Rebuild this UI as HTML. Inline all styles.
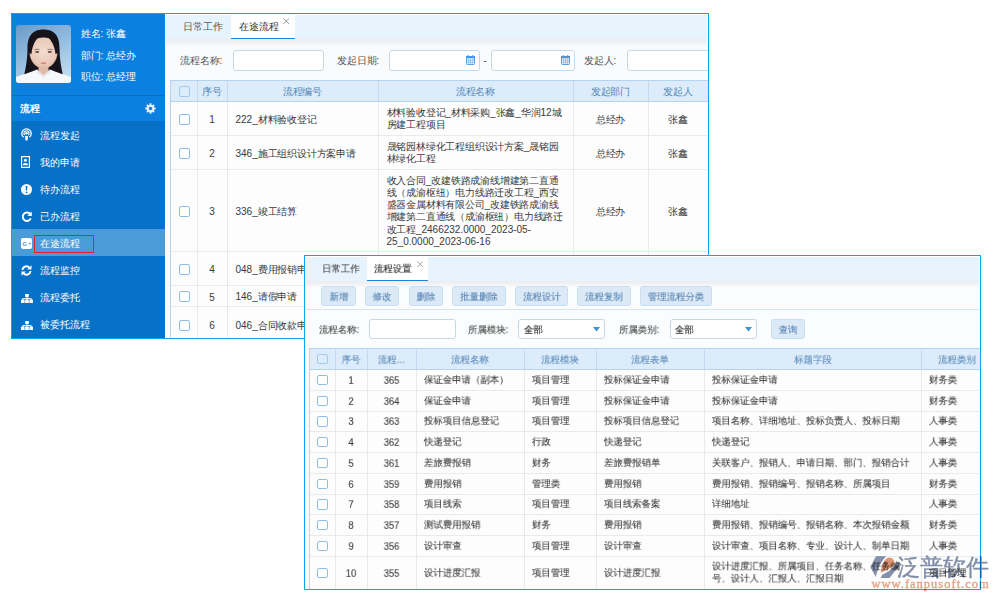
<!DOCTYPE html><html><head><meta charset="utf-8"><style>

html,body{margin:0;padding:0;width:1000px;height:600px;overflow:hidden;background:#fff;}
body{position:relative;font-family:"Liberation Sans",sans-serif;font-size:10px;color:#3c3c3c;}
div{box-sizing:border-box;}
.t{position:absolute;white-space:nowrap;}
svg{position:absolute;}

</style></head><body>
<div style="position:absolute;left:11px;top:13px;width:698px;height:326px;overflow:hidden;"><div style="position:absolute;left:-11px;top:-13px;width:1000px;height:600px;">
<div style="position:absolute;left:11px;top:13px;width:698px;height:326px;background:#ffffff;"></div>
<div style="position:absolute;left:166px;top:15px;width:541px;height:322px;background:#f9fbfd;"></div>
<div style="position:absolute;left:166px;top:15px;width:541px;height:24px;background:#e7f3fd;"></div>
<div style="position:absolute;left:231px;top:15px;width:64px;height:25px;background:#ffffff;border-bottom:2px solid #1f84d4;"></div>
<div class="t" style="left:183px;top:20.60px;line-height:12.000px;color:#555;">日常工作</div>
<div class="t" style="left:238.5px;top:20.60px;line-height:12.000px;color:#333;">在途流程</div>
<svg style="position:absolute;left:283px;top:18px" width="6.5" height="6.5" viewBox="0 0 6.5 6.5"><path d="M0.4 0.4L6.1 6.1M6.1 0.4L0.4 6.1" stroke="#8a8a8a" stroke-width="0.9"/></svg>
<div style="position:absolute;left:166px;top:39px;width:541px;height:8px;background:linear-gradient(#eaecef,#f9fbfd);"></div>
<div style="position:absolute;left:231px;top:40px;width:64px;height:1px;background:#f6e9e0;opacity:0.6;"></div>
<div class="t" style="left:179.5px;top:55.00px;line-height:12.000px;color:#555;">流程名称:</div>
<div style="position:absolute;left:233px;top:50px;width:91px;height:21px;background:#fff;border:1px solid #c3d9ec;border-radius:3px;"></div>
<div class="t" style="left:336.5px;top:55.00px;line-height:12.000px;color:#555;">发起日期:</div>
<div style="position:absolute;left:389px;top:50px;width:91px;height:21px;background:#fff;border:1px solid #c3d9ec;border-radius:3px;"></div>
<div style="position:absolute;left:491px;top:50px;width:84px;height:21px;background:#fff;border:1px solid #c3d9ec;border-radius:3px;"></div>
<div class="t" style="left:483.5px;top:55.00px;line-height:12.000px;color:#555;">-</div>
<div class="t" style="left:583.5px;top:55.00px;line-height:12.000px;color:#555;">发起人:</div>
<div style="position:absolute;left:627px;top:50px;width:100px;height:21px;background:#fff;border:1px solid #c3d9ec;border-radius:3px;"></div>
<svg style="position:absolute;left:466px;top:55px" width="9" height="10" viewBox="0 0 9 10"><rect x="0.5" y="1.5" width="8" height="8" rx="0.8" fill="#eef5fc" stroke="#5b9fe0" stroke-width="1"/><rect x="0" y="1" width="9" height="2.2" fill="#4d93dc"/><path d="M2.6 3.2V9M4.5 3.2V9M6.4 3.2V9M1 5.2H8M1 7.2H8" stroke="#86b8e8" stroke-width="0.7"/><rect x="1.7" y="0" width="1.1" height="2" fill="#5b9fe0"/><rect x="6.2" y="0" width="1.1" height="2" fill="#5b9fe0"/></svg>
<svg style="position:absolute;left:561px;top:55px" width="9" height="10" viewBox="0 0 9 10"><rect x="0.5" y="1.5" width="8" height="8" rx="0.8" fill="#eef5fc" stroke="#5b9fe0" stroke-width="1"/><rect x="0" y="1" width="9" height="2.2" fill="#4d93dc"/><path d="M2.6 3.2V9M4.5 3.2V9M6.4 3.2V9M1 5.2H8M1 7.2H8" stroke="#86b8e8" stroke-width="0.7"/><rect x="1.7" y="0" width="1.1" height="2" fill="#5b9fe0"/><rect x="6.2" y="0" width="1.1" height="2" fill="#5b9fe0"/></svg>
<div style="position:absolute;left:170px;top:80px;width:538px;height:22px;background:#dcecfb;"></div>
<div style="position:absolute;left:170px;top:102px;width:538px;height:240px;background:#fdfdfd;"></div>
<div style="position:absolute;left:170px;top:80px;width:538px;height:1px;background:#b5d4f0;"></div>
<div style="position:absolute;left:170px;top:101px;width:538px;height:1px;background:#b5d4f0;"></div>
<div style="position:absolute;left:170px;top:135px;width:538px;height:1px;background:#e8ebee;"></div>
<div style="position:absolute;left:170px;top:169px;width:538px;height:1px;background:#e8ebee;"></div>
<div style="position:absolute;left:170px;top:251px;width:538px;height:1px;background:#e8ebee;"></div>
<div style="position:absolute;left:170px;top:285px;width:538px;height:1px;background:#e8ebee;"></div>
<div style="position:absolute;left:170px;top:306px;width:538px;height:1px;background:#e8ebee;"></div>
<div style="position:absolute;left:170px;top:80px;width:1px;height:260px;background:#b5d4f0;"></div>
<div style="position:absolute;left:170px;top:80px;width:1px;height:22px;background:#b5d4f0;"></div>
<div style="position:absolute;left:197px;top:80px;width:1px;height:260px;background:#e8ebee;"></div>
<div style="position:absolute;left:197px;top:80px;width:1px;height:22px;background:#c3daf0;"></div>
<div style="position:absolute;left:227px;top:80px;width:1px;height:260px;background:#e8ebee;"></div>
<div style="position:absolute;left:227px;top:80px;width:1px;height:22px;background:#c3daf0;"></div>
<div style="position:absolute;left:378px;top:80px;width:1px;height:260px;background:#e8ebee;"></div>
<div style="position:absolute;left:378px;top:80px;width:1px;height:22px;background:#c3daf0;"></div>
<div style="position:absolute;left:573px;top:80px;width:1px;height:260px;background:#e8ebee;"></div>
<div style="position:absolute;left:573px;top:80px;width:1px;height:22px;background:#c3daf0;"></div>
<div style="position:absolute;left:648px;top:80px;width:1px;height:260px;background:#e8ebee;"></div>
<div style="position:absolute;left:648px;top:80px;width:1px;height:22px;background:#c3daf0;"></div>
<div style="position:absolute;left:179px;top:85.5px;width:11px;height:11px;background:transparent;border:1px solid #a3c9ea;border-radius:2px;"></div>
<div class="t" style="left:197px;top:86.00px;line-height:12.000px;color:#5285b8;width:30px;text-align:center;letter-spacing:-0.2px;">序号</div>
<div class="t" style="left:227px;top:86.00px;line-height:12.000px;color:#5285b8;width:151px;text-align:center;letter-spacing:-0.2px;">流程编号</div>
<div class="t" style="left:378px;top:86.00px;line-height:12.000px;color:#5285b8;width:195px;text-align:center;letter-spacing:-0.2px;">流程名称</div>
<div class="t" style="left:573px;top:86.00px;line-height:12.000px;color:#5285b8;width:75px;text-align:center;letter-spacing:-0.2px;">发起部门</div>
<div class="t" style="left:648px;top:86.00px;line-height:12.000px;color:#5285b8;width:60px;text-align:center;letter-spacing:-0.2px;">发起人</div>
<div style="position:absolute;left:179px;top:113.5px;width:11px;height:11px;background:#fff;border:1px solid #8fbde8;border-radius:2px;"></div>
<div class="t" style="left:197px;top:114.30px;line-height:12.000px;color:#3a3a3a;width:30px;text-align:center;">1</div>
<div class="t" style="left:235.5px;top:113.50px;line-height:12.000px;color:#3a3a3a;letter-spacing:-0.2px;"><span style="letter-spacing:0">222_</span>材料验收登记</div>
<div class="t" style="left:386.5px;top:107.40px;line-height:12.100px;color:#3a3a3a;letter-spacing:-0.2px;">材料验收登记<span style="letter-spacing:0">_</span>材料采购<span style="letter-spacing:0">_</span>张鑫<span style="letter-spacing:0">_</span>华润<span style="letter-spacing:0">12</span>城<br>房建工程项目</div>
<div class="t" style="left:573px;top:113.50px;line-height:12.000px;color:#3a3a3a;width:75px;text-align:center;letter-spacing:-0.2px;">总经办</div>
<div class="t" style="left:648px;top:113.50px;line-height:12.000px;color:#3a3a3a;width:60px;text-align:center;letter-spacing:-0.2px;">张鑫</div>
<div style="position:absolute;left:179px;top:147.5px;width:11px;height:11px;background:#fff;border:1px solid #8fbde8;border-radius:2px;"></div>
<div class="t" style="left:197px;top:148.30px;line-height:12.000px;color:#3a3a3a;width:30px;text-align:center;">2</div>
<div class="t" style="left:235.5px;top:147.50px;line-height:12.000px;color:#3a3a3a;letter-spacing:-0.2px;"><span style="letter-spacing:0">346_</span>施工组织设计方案申请</div>
<div class="t" style="left:386.5px;top:141.40px;line-height:12.100px;color:#3a3a3a;letter-spacing:-0.2px;">晟铭园林绿化工程组织设计方案<span style="letter-spacing:0">_</span>晟铭园<br>林绿化工程</div>
<div class="t" style="left:573px;top:147.50px;line-height:12.000px;color:#3a3a3a;width:75px;text-align:center;letter-spacing:-0.2px;">总经办</div>
<div class="t" style="left:648px;top:147.50px;line-height:12.000px;color:#3a3a3a;width:60px;text-align:center;letter-spacing:-0.2px;">张鑫</div>
<div style="position:absolute;left:179px;top:205.5px;width:11px;height:11px;background:#fff;border:1px solid #8fbde8;border-radius:2px;"></div>
<div class="t" style="left:197px;top:206.30px;line-height:12.000px;color:#3a3a3a;width:30px;text-align:center;">3</div>
<div class="t" style="left:235.5px;top:205.50px;line-height:12.000px;color:#3a3a3a;letter-spacing:-0.2px;"><span style="letter-spacing:0">336_</span>竣工结算</div>
<div class="t" style="left:386.5px;top:175.20px;line-height:12.100px;color:#3a3a3a;letter-spacing:-0.2px;">收入合同<span style="letter-spacing:0">_</span>改建铁路成渝线增建第二直通<br>线（成渝枢纽）电力线路迁改工程<span style="letter-spacing:0">_</span>西安<br>盛器金属材料有限公司<span style="letter-spacing:0">_</span>改建铁路成渝线<br>增建第二直通线（成渝枢纽）电力线路迁<br>改工程<span style="letter-spacing:0">_2466232.0000_2023-05-</span><br><span style="letter-spacing:0">25_0.0000_2023-06-16</span></div>
<div class="t" style="left:573px;top:205.50px;line-height:12.000px;color:#3a3a3a;width:75px;text-align:center;letter-spacing:-0.2px;">总经办</div>
<div class="t" style="left:648px;top:205.50px;line-height:12.000px;color:#3a3a3a;width:60px;text-align:center;letter-spacing:-0.2px;">张鑫</div>
<div style="position:absolute;left:179px;top:263.5px;width:11px;height:11px;background:#fff;border:1px solid #8fbde8;border-radius:2px;"></div>
<div class="t" style="left:197px;top:264.30px;line-height:12.000px;color:#3a3a3a;width:30px;text-align:center;">4</div>
<div class="t" style="left:235.5px;top:263.50px;line-height:12.000px;color:#3a3a3a;letter-spacing:-0.2px;"><span style="letter-spacing:0">048_</span>费用报销申请</div>
<div class="t" style="left:573px;top:263.50px;line-height:12.000px;color:#3a3a3a;width:75px;text-align:center;letter-spacing:-0.2px;">总经办</div>
<div class="t" style="left:648px;top:263.50px;line-height:12.000px;color:#3a3a3a;width:60px;text-align:center;letter-spacing:-0.2px;">张鑫</div>
<div style="position:absolute;left:179px;top:291.0px;width:11px;height:11px;background:#fff;border:1px solid #8fbde8;border-radius:2px;"></div>
<div class="t" style="left:197px;top:291.80px;line-height:12.000px;color:#3a3a3a;width:30px;text-align:center;">5</div>
<div class="t" style="left:235.5px;top:291.00px;line-height:12.000px;color:#3a3a3a;letter-spacing:-0.2px;"><span style="letter-spacing:0">146_</span>请假申请</div>
<div class="t" style="left:573px;top:291.00px;line-height:12.000px;color:#3a3a3a;width:75px;text-align:center;letter-spacing:-0.2px;">总经办</div>
<div class="t" style="left:648px;top:291.00px;line-height:12.000px;color:#3a3a3a;width:60px;text-align:center;letter-spacing:-0.2px;">张鑫</div>
<div style="position:absolute;left:179px;top:319.5px;width:11px;height:11px;background:#fff;border:1px solid #8fbde8;border-radius:2px;"></div>
<div class="t" style="left:197px;top:320.30px;line-height:12.000px;color:#3a3a3a;width:30px;text-align:center;">6</div>
<div class="t" style="left:235.5px;top:319.50px;line-height:12.000px;color:#3a3a3a;letter-spacing:-0.2px;"><span style="letter-spacing:0">046_</span>合同收款申请</div>
<div class="t" style="left:573px;top:319.50px;line-height:12.000px;color:#3a3a3a;width:75px;text-align:center;letter-spacing:-0.2px;">总经办</div>
<div class="t" style="left:648px;top:319.50px;line-height:12.000px;color:#3a3a3a;width:60px;text-align:center;letter-spacing:-0.2px;">张鑫</div>
<div style="position:absolute;left:12px;top:14px;width:153px;height:107px;background:#0b80e0;"></div>
<div style="position:absolute;left:12px;top:95px;width:153px;height:1px;background:#0a6bbf;"></div>
<div style="position:absolute;left:12px;top:121px;width:153px;height:217px;background:#0671c6;"></div>
<div style="position:absolute;left:12px;top:229px;width:153px;height:27px;background:#4c9bd9;"></div>
<svg style="position:absolute;left:16px;top:25px" width="55" height="58" viewBox="0 0 55 58"><defs><linearGradient id="pg" x1="0.1" y1="0" x2="0.6" y2="1"><stop offset="0" stop-color="#6c9ccb"/><stop offset="1" stop-color="#bcdaf1"/></linearGradient>
<radialGradient id="fg" cx="0.5" cy="0.45" r="0.55"><stop offset="0" stop-color="#f3dccf"/><stop offset="0.8" stop-color="#e9c9b8"/><stop offset="1" stop-color="#d9b3a0"/></radialGradient>
<clipPath id="pc"><rect width="55" height="58" rx="3"/></clipPath></defs>
<g clip-path="url(#pc)">
<rect width="55" height="58" fill="url(#pg)"/>
<path d="M27.5 4.5 C15 4.5 11.5 13 11.5 23 C11.5 33 10 42 8 50.5 L47 50.5 C45 42 43.5 33 43.5 23 C43.5 13 40 4.5 27.5 4.5Z" fill="#17131a"/>
<rect x="22.5" y="38" width="10" height="14" fill="#e0bba8"/>
<path d="M13.5 27 C13.5 17 19 12.5 27.5 12.5 C36 12.5 41.5 17 41.5 27 C41.5 36 35 43.5 27.5 43.5 C20 43.5 13.5 36 13.5 27Z" fill="url(#fg)"/>
<path d="M13 28 C12.5 16 18 9 27.5 9 C21 12 16.5 18 15.5 29Z" fill="#17131a"/>
<path d="M42 28 C42.5 16 37 9 27.5 9 C33 12 38.5 18 39.5 29Z" fill="#17131a"/>
<path d="M0 58 V52 C6 49.5 15 47.5 21 44.5 L27.5 50.5 L34 44.5 C40 47.5 49 49.5 55 52 V58Z" fill="#f7f8fb"/>
<path d="M21 44.5 L27.5 50.5 L34 44.5 L34.5 47 L27.5 52.5 L20.5 47Z" fill="#e6e6ea"/>
<path d="M18.5 24.8 Q21 23.8 23.5 24.6 M31.5 24.6 Q34 23.8 36.5 24.8" stroke="#6b5550" stroke-width="0.7" fill="none"/>
<ellipse cx="21.2" cy="27" rx="2" ry="0.9" fill="#5b4845"/><ellipse cx="33.8" cy="27" rx="2" ry="0.9" fill="#5b4845"/>
<ellipse cx="27.5" cy="38.2" rx="3" ry="1" fill="#d7868a"/>
</g></svg>
<div class="t" style="left:80.5px;top:28.40px;line-height:12.000px;color:#ffffff;">姓名: 张鑫</div>
<div class="t" style="left:80.5px;top:49.60px;line-height:12.000px;color:#ffffff;">部门: 总经办</div>
<div class="t" style="left:80.5px;top:70.60px;line-height:12.000px;color:#ffffff;">职位: 总经理</div>
<div class="t" style="left:19.5px;top:103.00px;line-height:12.000px;color:#ffffff;font-weight:bold;">流程</div>
<svg style="position:absolute;left:145px;top:102.5px" width="11" height="11" viewBox="0 0 11 11"><path fill="#e8f1fb" fill-rule="evenodd" d="M10.63 4.62 L10.63 6.38 L9.27 6.50 L8.87 7.46 L9.75 8.50 L8.50 9.75 L7.46 8.87 L6.50 9.27 L6.38 10.63 L4.62 10.63 L4.50 9.27 L3.54 8.87 L2.50 9.75 L1.25 8.50 L2.13 7.46 L1.73 6.50 L0.37 6.38 L0.37 4.62 L1.73 4.50 L2.13 3.54 L1.25 2.50 L2.50 1.25 L3.54 2.13 L4.50 1.73 L4.62 0.37 L6.38 0.37 L6.50 1.73 L7.46 2.13 L8.50 1.25 L9.75 2.50 L8.87 3.54 L9.27 4.50Z M5.5 3.8 A1.7 1.7 0 1 0 5.5 7.2 A1.7 1.7 0 1 0 5.5 3.8Z"/></svg>
<div class="t" style="left:40px;top:129.50px;line-height:12.000px;color:#ffffff;">流程发起</div>
<div class="t" style="left:40px;top:156.50px;line-height:12.000px;color:#ffffff;">我的申请</div>
<div class="t" style="left:40px;top:183.50px;line-height:12.000px;color:#ffffff;">待办流程</div>
<div class="t" style="left:40px;top:210.50px;line-height:12.000px;color:#ffffff;">已办流程</div>
<div class="t" style="left:40px;top:237.50px;line-height:12.000px;color:#ffffff;">在途流程</div>
<div class="t" style="left:40px;top:264.50px;line-height:12.000px;color:#ffffff;">流程监控</div>
<div class="t" style="left:40px;top:291.50px;line-height:12.000px;color:#ffffff;">流程委托</div>
<div class="t" style="left:40px;top:318.50px;line-height:12.000px;color:#ffffff;">被委托流程</div>
<div style="position:absolute;left:34px;top:235px;width:60px;height:18px;border:1px solid #e0202a;"></div>
<svg style="position:absolute;left:21px;top:128px" width="11" height="13" viewBox="0 0 11 13"><path d="M2.6 9.3 A4.7 4.7 0 1 1 8.4 9.3" fill="none" stroke="#fff" stroke-width="1.3"/><path d="M3.7 7.2 A2.6 2.6 0 1 1 7.3 7.2" fill="none" stroke="#fff" stroke-width="1.1"/><circle cx="5.5" cy="5.2" r="1.3" fill="#fff"/><path d="M4 8.2 Q5.5 7.2 7 8.2 L6.6 12.2 Q5.5 13 4.4 12.2Z" fill="#fff"/></svg>
<svg style="position:absolute;left:21px;top:155.5px" width="9" height="12" viewBox="0 0 9 12"><rect x="0.6" y="0.6" width="7.8" height="10.8" fill="none" stroke="#fff" stroke-width="1.2"/><circle cx="4.4" cy="4.3" r="1.5" fill="#fff"/><path d="M1.8 9.2 C1.8 6.4 7 6.4 7 9.2 Z" fill="#fff"/></svg>
<svg style="position:absolute;left:21px;top:183.5px" width="11" height="11" viewBox="0 0 11 11"><circle cx="5.5" cy="5.5" r="5.5" fill="#fff"/><path d="M4.6 2h1.8l-.3 4.6h-1.2z" fill="#0671c6"/><circle cx="5.5" cy="8.3" r="0.9" fill="#0671c6"/></svg>
<svg style="position:absolute;left:21.5px;top:210.5px" width="10" height="11" viewBox="0 0 10 11"><path d="M8.3 3.2 A4.2 4.2 0 1 0 8.8 7.4" fill="none" stroke="#fff" stroke-width="2"/><path d="M9.8 0.5 V5 H5.3Z" fill="#fff"/></svg>
<svg style="position:absolute;left:21px;top:237.5px" width="11" height="11" viewBox="0 0 11 11"><rect width="11" height="11" rx="2" fill="#fff"/><text x="1.3" y="7.6" font-size="6" font-family="Liberation Sans" font-weight="bold" fill="#4c9bd9">G</text><path d="M7.6 5.5h2.4M8.8 4.3v2.4" stroke="#4c9bd9" stroke-width="0.7"/></svg>
<svg style="position:absolute;left:21px;top:264.5px" width="11" height="11" viewBox="0 0 11 11"><path d="M1.5 5 A4 4 0 0 1 8.6 2.8" fill="none" stroke="#fff" stroke-width="1.9"/><path d="M10.5 0.3V4.6H6.2Z" fill="#fff"/><path d="M9.5 6 A4 4 0 0 1 2.4 8.2" fill="none" stroke="#fff" stroke-width="1.9"/><path d="M0.5 10.7V6.4H4.8Z" fill="#fff"/></svg>
<svg style="position:absolute;left:21px;top:294px" width="12" height="9" viewBox="0 0 12 9"><rect x="4.2" y="0" width="3.6" height="3" fill="#fff"/><path d="M6 3V4.6M1.8 6V4.6H10.2V6M6 4.6V6" stroke="#fff" stroke-width="1" fill="none"/><rect x="0" y="5.6" width="3.6" height="3.4" fill="#fff"/><rect x="4.2" y="5.6" width="3.6" height="3.4" fill="#fff"/><rect x="8.4" y="5.6" width="3.6" height="3.4" fill="#fff"/></svg>
<svg style="position:absolute;left:21px;top:320.5px" width="12" height="9" viewBox="0 0 12 9"><rect x="4.2" y="0" width="3.6" height="3" fill="#fff"/><path d="M6 3V4.6M1.8 6V4.6H10.2V6M6 4.6V6" stroke="#fff" stroke-width="1" fill="none"/><rect x="0" y="5.6" width="3.6" height="3.4" fill="#fff"/><rect x="4.2" y="5.6" width="3.6" height="3.4" fill="#fff"/><rect x="8.4" y="5.6" width="3.6" height="3.4" fill="#fff"/></svg>
<div style="position:absolute;left:11px;top:13px;width:698px;height:326px;border:1px solid #0aa6ee;"></div>
</div></div>
<div style="position:absolute;left:304px;top:255px;width:677px;height:335px;overflow:hidden;"><div style="position:absolute;left:-304px;top:-255px;width:1000px;height:600px;">
<div style="position:absolute;left:304px;top:255px;width:677px;height:335px;background:#ffffff;"></div>
<div style="position:absolute;left:306px;top:257px;width:673px;height:332px;background:#fafcfd;"></div>
<div style="position:absolute;left:306px;top:257px;width:673px;height:24px;background:#e7f3fd;"></div>
<div style="position:absolute;left:367px;top:257px;width:61px;height:25px;background:#fff;border-bottom:2px solid #1f84d4;"></div>
<div class="t" style="left:321.5px;top:263.42px;line-height:12.766px;color:#444;transform:scale(0.94);transform-origin:0 6.38px;will-change:transform;-webkit-text-stroke:0.1px #444;">日常工作</div>
<div class="t" style="left:374px;top:263.42px;line-height:12.766px;color:#222;transform:scale(0.94);transform-origin:0 6.38px;will-change:transform;-webkit-text-stroke:0.1px #222;">流程设置</div>
<svg style="position:absolute;left:416.5px;top:260.5px" width="6.5" height="6.5" viewBox="0 0 6.5 6.5"><path d="M0.5 0.5L6 6M6 0.5L0.5 6" stroke="#8a8a8a" stroke-width="0.8"/></svg>
<div style="position:absolute;left:306px;top:281px;width:673px;height:7px;background:linear-gradient(#eaecef,#fafcfd);"></div>
<div style="position:absolute;left:321px;top:286px;width:35px;height:20px;background:#dceaf8;border:1px solid #cadef1;border-radius:3px;"></div>
<div class="t" style="left:321px;top:290.62px;line-height:12.766px;color:#5480ae;width:35px;text-align:center;transform:scale(0.94);transform-origin:50% 6.38px;will-change:transform;-webkit-text-stroke:0.1px #5480ae;">新增</div>
<div style="position:absolute;left:365px;top:286px;width:34px;height:20px;background:#dceaf8;border:1px solid #cadef1;border-radius:3px;"></div>
<div class="t" style="left:365px;top:290.62px;line-height:12.766px;color:#5480ae;width:34px;text-align:center;transform:scale(0.94);transform-origin:50% 6.38px;will-change:transform;-webkit-text-stroke:0.1px #5480ae;">修改</div>
<div style="position:absolute;left:409px;top:286px;width:34px;height:20px;background:#dceaf8;border:1px solid #cadef1;border-radius:3px;"></div>
<div class="t" style="left:409px;top:290.62px;line-height:12.766px;color:#5480ae;width:34px;text-align:center;transform:scale(0.94);transform-origin:50% 6.38px;will-change:transform;-webkit-text-stroke:0.1px #5480ae;">删除</div>
<div style="position:absolute;left:452px;top:286px;width:54px;height:20px;background:#dceaf8;border:1px solid #cadef1;border-radius:3px;"></div>
<div class="t" style="left:452px;top:290.62px;line-height:12.766px;color:#5480ae;width:54px;text-align:center;transform:scale(0.94);transform-origin:50% 6.38px;will-change:transform;-webkit-text-stroke:0.1px #5480ae;">批量删除</div>
<div style="position:absolute;left:515px;top:286px;width:53px;height:20px;background:#dceaf8;border:1px solid #cadef1;border-radius:3px;"></div>
<div class="t" style="left:515px;top:290.62px;line-height:12.766px;color:#5480ae;width:53px;text-align:center;transform:scale(0.94);transform-origin:50% 6.38px;will-change:transform;-webkit-text-stroke:0.1px #5480ae;">流程设计</div>
<div style="position:absolute;left:577px;top:286px;width:54px;height:20px;background:#dceaf8;border:1px solid #cadef1;border-radius:3px;"></div>
<div class="t" style="left:577px;top:290.62px;line-height:12.766px;color:#5480ae;width:54px;text-align:center;transform:scale(0.94);transform-origin:50% 6.38px;will-change:transform;-webkit-text-stroke:0.1px #5480ae;">流程复制</div>
<div style="position:absolute;left:640px;top:286px;width:72px;height:20px;background:#dceaf8;border:1px solid #cadef1;border-radius:3px;"></div>
<div class="t" style="left:640px;top:290.62px;line-height:12.766px;color:#5480ae;width:72px;text-align:center;transform:scale(0.94);transform-origin:50% 6.38px;will-change:transform;-webkit-text-stroke:0.1px #5480ae;">管理流程分类</div>
<div style="position:absolute;left:306px;top:309px;width:673px;height:1px;background:#d3e4f3;"></div>
<div class="t" style="left:318.5px;top:323.82px;line-height:12.766px;color:#444;transform:scale(0.94);transform-origin:0 6.38px;will-change:transform;-webkit-text-stroke:0.1px #444;">流程名称:</div>
<div style="position:absolute;left:369px;top:319px;width:87px;height:20px;background:#fff;border:1px solid #c3d9ec;border-radius:3px;"></div>
<div class="t" style="left:467.5px;top:323.82px;line-height:12.766px;color:#444;transform:scale(0.94);transform-origin:0 6.38px;will-change:transform;-webkit-text-stroke:0.1px #444;">所属模块:</div>
<div style="position:absolute;left:518px;top:319px;width:87px;height:20px;background:#fff;border:1px solid #c3d9ec;border-radius:3px;"></div>
<div class="t" style="left:523.5px;top:323.82px;line-height:12.766px;color:#222;transform:scale(0.94);transform-origin:0 6.38px;will-change:transform;-webkit-text-stroke:0.1px #222;">全部</div>
<div class="t" style="left:619px;top:323.82px;line-height:12.766px;color:#444;transform:scale(0.94);transform-origin:0 6.38px;will-change:transform;-webkit-text-stroke:0.1px #444;">所属类别:</div>
<div style="position:absolute;left:670px;top:319px;width:87px;height:20px;background:#fff;border:1px solid #c3d9ec;border-radius:3px;"></div>
<div class="t" style="left:675px;top:323.82px;line-height:12.766px;color:#222;transform:scale(0.94);transform-origin:0 6.38px;will-change:transform;-webkit-text-stroke:0.1px #222;">全部</div>
<svg style="position:absolute;left:593px;top:327px" width="7" height="5" viewBox="0 0 7 5"><path d="M0 0H7L3.5 4.5Z" fill="#3f8fd8"/></svg>
<svg style="position:absolute;left:744.5px;top:327px" width="7" height="5" viewBox="0 0 7 5"><path d="M0 0H7L3.5 4.5Z" fill="#3f8fd8"/></svg>
<div style="position:absolute;left:771px;top:319px;width:34px;height:20px;background:#dceaf8;border:1px solid #cadef1;border-radius:3px;"></div>
<div class="t" style="left:771px;top:323.62px;line-height:12.766px;color:#5480ae;width:34px;text-align:center;transform:scale(0.94);transform-origin:50% 6.38px;will-change:transform;-webkit-text-stroke:0.1px #5480ae;">查询</div>
<div style="position:absolute;left:309px;top:348px;width:671px;height:22px;background:#dcecfb;"></div>
<div style="position:absolute;left:309px;top:370px;width:671px;height:220px;background:#fdfdfd;"></div>
<div style="position:absolute;left:309px;top:348px;width:671px;height:1px;background:#b5d4f0;"></div>
<div style="position:absolute;left:309px;top:369px;width:671px;height:1px;background:#b5d4f0;"></div>
<div style="position:absolute;left:309px;top:390px;width:671px;height:1px;background:#e8ebee;"></div>
<div style="position:absolute;left:309px;top:411px;width:671px;height:1px;background:#e8ebee;"></div>
<div style="position:absolute;left:309px;top:431px;width:671px;height:1px;background:#e8ebee;"></div>
<div style="position:absolute;left:309px;top:452px;width:671px;height:1px;background:#e8ebee;"></div>
<div style="position:absolute;left:309px;top:473px;width:671px;height:1px;background:#e8ebee;"></div>
<div style="position:absolute;left:309px;top:494px;width:671px;height:1px;background:#e8ebee;"></div>
<div style="position:absolute;left:309px;top:514px;width:671px;height:1px;background:#e8ebee;"></div>
<div style="position:absolute;left:309px;top:535px;width:671px;height:1px;background:#e8ebee;"></div>
<div style="position:absolute;left:309px;top:556px;width:671px;height:1px;background:#e8ebee;"></div>
<div style="position:absolute;left:309px;top:348px;width:1px;height:241px;background:#b5d4f0;"></div>
<div style="position:absolute;left:309px;top:348px;width:1px;height:22px;background:#b5d4f0;"></div>
<div style="position:absolute;left:335px;top:348px;width:1px;height:241px;background:#e8ebee;"></div>
<div style="position:absolute;left:335px;top:348px;width:1px;height:22px;background:#c3daf0;"></div>
<div style="position:absolute;left:367px;top:348px;width:1px;height:241px;background:#e8ebee;"></div>
<div style="position:absolute;left:367px;top:348px;width:1px;height:22px;background:#c3daf0;"></div>
<div style="position:absolute;left:416px;top:348px;width:1px;height:241px;background:#e8ebee;"></div>
<div style="position:absolute;left:416px;top:348px;width:1px;height:22px;background:#c3daf0;"></div>
<div style="position:absolute;left:524px;top:348px;width:1px;height:241px;background:#e8ebee;"></div>
<div style="position:absolute;left:524px;top:348px;width:1px;height:22px;background:#c3daf0;"></div>
<div style="position:absolute;left:596px;top:348px;width:1px;height:241px;background:#e8ebee;"></div>
<div style="position:absolute;left:596px;top:348px;width:1px;height:22px;background:#c3daf0;"></div>
<div style="position:absolute;left:704px;top:348px;width:1px;height:241px;background:#e8ebee;"></div>
<div style="position:absolute;left:704px;top:348px;width:1px;height:22px;background:#c3daf0;"></div>
<div style="position:absolute;left:921px;top:348px;width:1px;height:241px;background:#e8ebee;"></div>
<div style="position:absolute;left:921px;top:348px;width:1px;height:22px;background:#c3daf0;"></div>
<div style="position:absolute;left:317px;top:353.5px;width:10.5px;height:10.5px;background:transparent;border:1px solid #a3c9ea;border-radius:2px;"></div>
<div class="t" style="left:335px;top:353.62px;line-height:12.766px;color:#5a88b8;width:32px;text-align:center;transform:scale(0.94);transform-origin:50% 6.38px;will-change:transform;-webkit-text-stroke:0.1px #5a88b8;">序号</div>
<div class="t" style="left:367px;top:353.62px;line-height:12.766px;color:#5a88b8;width:49px;text-align:center;transform:scale(0.94);transform-origin:50% 6.38px;will-change:transform;-webkit-text-stroke:0.1px #5a88b8;">流程...</div>
<div class="t" style="left:416px;top:353.62px;line-height:12.766px;color:#5a88b8;width:108px;text-align:center;transform:scale(0.94);transform-origin:50% 6.38px;will-change:transform;-webkit-text-stroke:0.1px #5a88b8;">流程名称</div>
<div class="t" style="left:524px;top:353.62px;line-height:12.766px;color:#5a88b8;width:72px;text-align:center;transform:scale(0.94);transform-origin:50% 6.38px;will-change:transform;-webkit-text-stroke:0.1px #5a88b8;">流程模块</div>
<div class="t" style="left:596px;top:353.62px;line-height:12.766px;color:#5a88b8;width:108px;text-align:center;transform:scale(0.94);transform-origin:50% 6.38px;will-change:transform;-webkit-text-stroke:0.1px #5a88b8;">流程表单</div>
<div class="t" style="left:704px;top:353.62px;line-height:12.766px;color:#5a88b8;width:217px;text-align:center;transform:scale(0.94);transform-origin:50% 6.38px;will-change:transform;-webkit-text-stroke:0.1px #5a88b8;">标题字段</div>
<div class="t" style="left:921px;top:353.62px;line-height:12.766px;color:#5a88b8;width:72px;text-align:center;transform:scale(0.94);transform-origin:50% 6.38px;will-change:transform;-webkit-text-stroke:0.1px #5a88b8;">流程类别</div>
<div style="position:absolute;left:317px;top:374.75px;width:10.5px;height:10.5px;background:#fff;border:1px solid #8fbde8;border-radius:2px;"></div>
<div class="t" style="left:335px;top:374.62px;line-height:12.766px;color:#383838;width:32px;text-align:center;transform:scale(0.94);transform-origin:50% 6.38px;will-change:transform;-webkit-text-stroke:0.1px #383838;">1</div>
<div class="t" style="left:367px;top:374.62px;line-height:12.766px;color:#383838;width:49px;text-align:center;transform:scale(0.94);transform-origin:50% 6.38px;will-change:transform;-webkit-text-stroke:0.1px #383838;">365</div>
<div class="t" style="left:424px;top:373.62px;line-height:12.766px;color:#383838;transform:scale(0.94);transform-origin:0 6.38px;will-change:transform;-webkit-text-stroke:0.1px #383838;">保证金申请（副本）</div>
<div class="t" style="left:532px;top:373.62px;line-height:12.766px;color:#383838;transform:scale(0.94);transform-origin:0 6.38px;will-change:transform;-webkit-text-stroke:0.1px #383838;">项目管理</div>
<div class="t" style="left:604px;top:373.62px;line-height:12.766px;color:#383838;transform:scale(0.94);transform-origin:0 6.38px;will-change:transform;-webkit-text-stroke:0.1px #383838;">投标保证金申请</div>
<div class="t" style="left:712px;top:373.62px;line-height:12.766px;color:#383838;transform:scale(0.94);transform-origin:0 6.38px;will-change:transform;-webkit-text-stroke:0.1px #383838;">投标保证金申请</div>
<div class="t" style="left:929px;top:373.62px;line-height:12.766px;color:#383838;transform:scale(0.94);transform-origin:0 6.38px;will-change:transform;-webkit-text-stroke:0.1px #383838;">财务类</div>
<div style="position:absolute;left:317px;top:395.75px;width:10.5px;height:10.5px;background:#fff;border:1px solid #8fbde8;border-radius:2px;"></div>
<div class="t" style="left:335px;top:395.62px;line-height:12.766px;color:#383838;width:32px;text-align:center;transform:scale(0.94);transform-origin:50% 6.38px;will-change:transform;-webkit-text-stroke:0.1px #383838;">2</div>
<div class="t" style="left:367px;top:395.62px;line-height:12.766px;color:#383838;width:49px;text-align:center;transform:scale(0.94);transform-origin:50% 6.38px;will-change:transform;-webkit-text-stroke:0.1px #383838;">364</div>
<div class="t" style="left:424px;top:394.62px;line-height:12.766px;color:#383838;transform:scale(0.94);transform-origin:0 6.38px;will-change:transform;-webkit-text-stroke:0.1px #383838;">保证金申请</div>
<div class="t" style="left:532px;top:394.62px;line-height:12.766px;color:#383838;transform:scale(0.94);transform-origin:0 6.38px;will-change:transform;-webkit-text-stroke:0.1px #383838;">项目管理</div>
<div class="t" style="left:604px;top:394.62px;line-height:12.766px;color:#383838;transform:scale(0.94);transform-origin:0 6.38px;will-change:transform;-webkit-text-stroke:0.1px #383838;">投标保证金申请</div>
<div class="t" style="left:712px;top:394.62px;line-height:12.766px;color:#383838;transform:scale(0.94);transform-origin:0 6.38px;will-change:transform;-webkit-text-stroke:0.1px #383838;">投标保证金申请</div>
<div class="t" style="left:929px;top:394.62px;line-height:12.766px;color:#383838;transform:scale(0.94);transform-origin:0 6.38px;will-change:transform;-webkit-text-stroke:0.1px #383838;">财务类</div>
<div style="position:absolute;left:317px;top:416.25px;width:10.5px;height:10.5px;background:#fff;border:1px solid #8fbde8;border-radius:2px;"></div>
<div class="t" style="left:335px;top:416.12px;line-height:12.766px;color:#383838;width:32px;text-align:center;transform:scale(0.94);transform-origin:50% 6.38px;will-change:transform;-webkit-text-stroke:0.1px #383838;">3</div>
<div class="t" style="left:367px;top:416.12px;line-height:12.766px;color:#383838;width:49px;text-align:center;transform:scale(0.94);transform-origin:50% 6.38px;will-change:transform;-webkit-text-stroke:0.1px #383838;">363</div>
<div class="t" style="left:424px;top:415.12px;line-height:12.766px;color:#383838;transform:scale(0.94);transform-origin:0 6.38px;will-change:transform;-webkit-text-stroke:0.1px #383838;">投标项目信息登记</div>
<div class="t" style="left:532px;top:415.12px;line-height:12.766px;color:#383838;transform:scale(0.94);transform-origin:0 6.38px;will-change:transform;-webkit-text-stroke:0.1px #383838;">项目管理</div>
<div class="t" style="left:604px;top:415.12px;line-height:12.766px;color:#383838;transform:scale(0.94);transform-origin:0 6.38px;will-change:transform;-webkit-text-stroke:0.1px #383838;">投标项目信息登记</div>
<div class="t" style="left:712px;top:415.12px;line-height:12.766px;color:#383838;transform:scale(0.94);transform-origin:0 6.38px;will-change:transform;-webkit-text-stroke:0.1px #383838;">项目名称、详细地址、投标负责人、投标日期</div>
<div class="t" style="left:929px;top:415.12px;line-height:12.766px;color:#383838;transform:scale(0.94);transform-origin:0 6.38px;will-change:transform;-webkit-text-stroke:0.1px #383838;">人事类</div>
<div style="position:absolute;left:317px;top:436.75px;width:10.5px;height:10.5px;background:#fff;border:1px solid #8fbde8;border-radius:2px;"></div>
<div class="t" style="left:335px;top:436.62px;line-height:12.766px;color:#383838;width:32px;text-align:center;transform:scale(0.94);transform-origin:50% 6.38px;will-change:transform;-webkit-text-stroke:0.1px #383838;">4</div>
<div class="t" style="left:367px;top:436.62px;line-height:12.766px;color:#383838;width:49px;text-align:center;transform:scale(0.94);transform-origin:50% 6.38px;will-change:transform;-webkit-text-stroke:0.1px #383838;">362</div>
<div class="t" style="left:424px;top:435.62px;line-height:12.766px;color:#383838;transform:scale(0.94);transform-origin:0 6.38px;will-change:transform;-webkit-text-stroke:0.1px #383838;">快递登记</div>
<div class="t" style="left:532px;top:435.62px;line-height:12.766px;color:#383838;transform:scale(0.94);transform-origin:0 6.38px;will-change:transform;-webkit-text-stroke:0.1px #383838;">行政</div>
<div class="t" style="left:604px;top:435.62px;line-height:12.766px;color:#383838;transform:scale(0.94);transform-origin:0 6.38px;will-change:transform;-webkit-text-stroke:0.1px #383838;">快递登记</div>
<div class="t" style="left:712px;top:435.62px;line-height:12.766px;color:#383838;transform:scale(0.94);transform-origin:0 6.38px;will-change:transform;-webkit-text-stroke:0.1px #383838;">快递登记</div>
<div class="t" style="left:929px;top:435.62px;line-height:12.766px;color:#383838;transform:scale(0.94);transform-origin:0 6.38px;will-change:transform;-webkit-text-stroke:0.1px #383838;">人事类</div>
<div style="position:absolute;left:317px;top:457.75px;width:10.5px;height:10.5px;background:#fff;border:1px solid #8fbde8;border-radius:2px;"></div>
<div class="t" style="left:335px;top:457.62px;line-height:12.766px;color:#383838;width:32px;text-align:center;transform:scale(0.94);transform-origin:50% 6.38px;will-change:transform;-webkit-text-stroke:0.1px #383838;">5</div>
<div class="t" style="left:367px;top:457.62px;line-height:12.766px;color:#383838;width:49px;text-align:center;transform:scale(0.94);transform-origin:50% 6.38px;will-change:transform;-webkit-text-stroke:0.1px #383838;">361</div>
<div class="t" style="left:424px;top:456.62px;line-height:12.766px;color:#383838;transform:scale(0.94);transform-origin:0 6.38px;will-change:transform;-webkit-text-stroke:0.1px #383838;">差旅费报销</div>
<div class="t" style="left:532px;top:456.62px;line-height:12.766px;color:#383838;transform:scale(0.94);transform-origin:0 6.38px;will-change:transform;-webkit-text-stroke:0.1px #383838;">财务</div>
<div class="t" style="left:604px;top:456.62px;line-height:12.766px;color:#383838;transform:scale(0.94);transform-origin:0 6.38px;will-change:transform;-webkit-text-stroke:0.1px #383838;">差旅费报销单</div>
<div class="t" style="left:712px;top:456.62px;line-height:12.766px;color:#383838;transform:scale(0.94);transform-origin:0 6.38px;will-change:transform;-webkit-text-stroke:0.1px #383838;">关联客户、报销人、申请日期、部门、报销合计</div>
<div class="t" style="left:929px;top:456.62px;line-height:12.766px;color:#383838;transform:scale(0.94);transform-origin:0 6.38px;will-change:transform;-webkit-text-stroke:0.1px #383838;">人事类</div>
<div style="position:absolute;left:317px;top:478.75px;width:10.5px;height:10.5px;background:#fff;border:1px solid #8fbde8;border-radius:2px;"></div>
<div class="t" style="left:335px;top:478.62px;line-height:12.766px;color:#383838;width:32px;text-align:center;transform:scale(0.94);transform-origin:50% 6.38px;will-change:transform;-webkit-text-stroke:0.1px #383838;">6</div>
<div class="t" style="left:367px;top:478.62px;line-height:12.766px;color:#383838;width:49px;text-align:center;transform:scale(0.94);transform-origin:50% 6.38px;will-change:transform;-webkit-text-stroke:0.1px #383838;">359</div>
<div class="t" style="left:424px;top:477.62px;line-height:12.766px;color:#383838;transform:scale(0.94);transform-origin:0 6.38px;will-change:transform;-webkit-text-stroke:0.1px #383838;">费用报销</div>
<div class="t" style="left:532px;top:477.62px;line-height:12.766px;color:#383838;transform:scale(0.94);transform-origin:0 6.38px;will-change:transform;-webkit-text-stroke:0.1px #383838;">管理类</div>
<div class="t" style="left:604px;top:477.62px;line-height:12.766px;color:#383838;transform:scale(0.94);transform-origin:0 6.38px;will-change:transform;-webkit-text-stroke:0.1px #383838;">费用报销</div>
<div class="t" style="left:712px;top:477.62px;line-height:12.766px;color:#383838;transform:scale(0.94);transform-origin:0 6.38px;will-change:transform;-webkit-text-stroke:0.1px #383838;">费用报销、报销编号、报销名称、所属项目</div>
<div class="t" style="left:929px;top:477.62px;line-height:12.766px;color:#383838;transform:scale(0.94);transform-origin:0 6.38px;will-change:transform;-webkit-text-stroke:0.1px #383838;">财务类</div>
<div style="position:absolute;left:317px;top:499.25px;width:10.5px;height:10.5px;background:#fff;border:1px solid #8fbde8;border-radius:2px;"></div>
<div class="t" style="left:335px;top:499.12px;line-height:12.766px;color:#383838;width:32px;text-align:center;transform:scale(0.94);transform-origin:50% 6.38px;will-change:transform;-webkit-text-stroke:0.1px #383838;">7</div>
<div class="t" style="left:367px;top:499.12px;line-height:12.766px;color:#383838;width:49px;text-align:center;transform:scale(0.94);transform-origin:50% 6.38px;will-change:transform;-webkit-text-stroke:0.1px #383838;">358</div>
<div class="t" style="left:424px;top:498.12px;line-height:12.766px;color:#383838;transform:scale(0.94);transform-origin:0 6.38px;will-change:transform;-webkit-text-stroke:0.1px #383838;">项目线索</div>
<div class="t" style="left:532px;top:498.12px;line-height:12.766px;color:#383838;transform:scale(0.94);transform-origin:0 6.38px;will-change:transform;-webkit-text-stroke:0.1px #383838;">项目管理</div>
<div class="t" style="left:604px;top:498.12px;line-height:12.766px;color:#383838;transform:scale(0.94);transform-origin:0 6.38px;will-change:transform;-webkit-text-stroke:0.1px #383838;">项目线索备案</div>
<div class="t" style="left:712px;top:498.12px;line-height:12.766px;color:#383838;transform:scale(0.94);transform-origin:0 6.38px;will-change:transform;-webkit-text-stroke:0.1px #383838;">详细地址</div>
<div class="t" style="left:929px;top:498.12px;line-height:12.766px;color:#383838;transform:scale(0.94);transform-origin:0 6.38px;will-change:transform;-webkit-text-stroke:0.1px #383838;">人事类</div>
<div style="position:absolute;left:317px;top:519.75px;width:10.5px;height:10.5px;background:#fff;border:1px solid #8fbde8;border-radius:2px;"></div>
<div class="t" style="left:335px;top:519.62px;line-height:12.766px;color:#383838;width:32px;text-align:center;transform:scale(0.94);transform-origin:50% 6.38px;will-change:transform;-webkit-text-stroke:0.1px #383838;">8</div>
<div class="t" style="left:367px;top:519.62px;line-height:12.766px;color:#383838;width:49px;text-align:center;transform:scale(0.94);transform-origin:50% 6.38px;will-change:transform;-webkit-text-stroke:0.1px #383838;">357</div>
<div class="t" style="left:424px;top:518.62px;line-height:12.766px;color:#383838;transform:scale(0.94);transform-origin:0 6.38px;will-change:transform;-webkit-text-stroke:0.1px #383838;">测试费用报销</div>
<div class="t" style="left:532px;top:518.62px;line-height:12.766px;color:#383838;transform:scale(0.94);transform-origin:0 6.38px;will-change:transform;-webkit-text-stroke:0.1px #383838;">财务</div>
<div class="t" style="left:604px;top:518.62px;line-height:12.766px;color:#383838;transform:scale(0.94);transform-origin:0 6.38px;will-change:transform;-webkit-text-stroke:0.1px #383838;">费用报销</div>
<div class="t" style="left:712px;top:518.62px;line-height:12.766px;color:#383838;transform:scale(0.94);transform-origin:0 6.38px;will-change:transform;-webkit-text-stroke:0.1px #383838;">费用报销、报销编号、报销名称、本次报销金额</div>
<div class="t" style="left:929px;top:518.62px;line-height:12.766px;color:#383838;transform:scale(0.94);transform-origin:0 6.38px;will-change:transform;-webkit-text-stroke:0.1px #383838;">财务类</div>
<div style="position:absolute;left:317px;top:540.75px;width:10.5px;height:10.5px;background:#fff;border:1px solid #8fbde8;border-radius:2px;"></div>
<div class="t" style="left:335px;top:540.62px;line-height:12.766px;color:#383838;width:32px;text-align:center;transform:scale(0.94);transform-origin:50% 6.38px;will-change:transform;-webkit-text-stroke:0.1px #383838;">9</div>
<div class="t" style="left:367px;top:540.62px;line-height:12.766px;color:#383838;width:49px;text-align:center;transform:scale(0.94);transform-origin:50% 6.38px;will-change:transform;-webkit-text-stroke:0.1px #383838;">356</div>
<div class="t" style="left:424px;top:539.62px;line-height:12.766px;color:#383838;transform:scale(0.94);transform-origin:0 6.38px;will-change:transform;-webkit-text-stroke:0.1px #383838;">设计审查</div>
<div class="t" style="left:532px;top:539.62px;line-height:12.766px;color:#383838;transform:scale(0.94);transform-origin:0 6.38px;will-change:transform;-webkit-text-stroke:0.1px #383838;">项目管理</div>
<div class="t" style="left:604px;top:539.62px;line-height:12.766px;color:#383838;transform:scale(0.94);transform-origin:0 6.38px;will-change:transform;-webkit-text-stroke:0.1px #383838;">设计审查</div>
<div class="t" style="left:712px;top:539.62px;line-height:12.766px;color:#383838;transform:scale(0.94);transform-origin:0 6.38px;will-change:transform;-webkit-text-stroke:0.1px #383838;">设计审查、项目名称、专业、设计人、制单日期</div>
<div class="t" style="left:929px;top:539.62px;line-height:12.766px;color:#383838;transform:scale(0.94);transform-origin:0 6.38px;will-change:transform;-webkit-text-stroke:0.1px #383838;">人事类</div>
<div style="position:absolute;left:317px;top:567.75px;width:10.5px;height:10.5px;background:#fff;border:1px solid #8fbde8;border-radius:2px;"></div>
<div class="t" style="left:335px;top:567.62px;line-height:12.766px;color:#383838;width:32px;text-align:center;transform:scale(0.94);transform-origin:50% 6.38px;will-change:transform;-webkit-text-stroke:0.1px #383838;">10</div>
<div class="t" style="left:367px;top:567.62px;line-height:12.766px;color:#383838;width:49px;text-align:center;transform:scale(0.94);transform-origin:50% 6.38px;will-change:transform;-webkit-text-stroke:0.1px #383838;">355</div>
<div class="t" style="left:424px;top:566.62px;line-height:12.766px;color:#383838;transform:scale(0.94);transform-origin:0 6.38px;will-change:transform;-webkit-text-stroke:0.1px #383838;">设计进度汇报</div>
<div class="t" style="left:532px;top:566.62px;line-height:12.766px;color:#383838;transform:scale(0.94);transform-origin:0 6.38px;will-change:transform;-webkit-text-stroke:0.1px #383838;">项目管理</div>
<div class="t" style="left:604px;top:566.62px;line-height:12.766px;color:#383838;transform:scale(0.94);transform-origin:0 6.38px;will-change:transform;-webkit-text-stroke:0.1px #383838;">设计进度汇报</div>
<div class="t" style="left:712px;top:560.23px;line-height:12.766px;color:#383838;transform:scale(0.94);transform-origin:0 12.77px;will-change:transform;-webkit-text-stroke:0.1px #383838;">设计进度汇报、所属项目、任务名称、任务编<br>号、设计人、汇报人、汇报日期</div>
<div class="t" style="left:929px;top:566.62px;line-height:12.766px;color:#383838;transform:scale(0.94);transform-origin:0 6.38px;will-change:transform;-webkit-text-stroke:0.1px #383838;">项目管理</div>
<div style="position:absolute;left:304px;top:255px;width:677px;height:335px;border:1px solid #0aa6ee;"></div>
</div></div>
<svg style="position:absolute;left:866px;top:552px" width="40" height="30" viewBox="0 0 40 30"><g style="mix-blend-mode:multiply">
<path d="M4.25 15 L10 4.25 L20 4.25 C15.5 9 12 16 9.8 25 Z" fill="#8592ad"/>
<path d="M14.5 26 L23.5 26 L33.5 13.5 L30.5 10 C28 16.5 21 20.5 16.5 22.5 Z" fill="#8592ad"/>
<path d="M14.8 20.5 C15.5 11.5 19.5 5.5 23.5 5.5 C27 5.5 29 9 28.5 12.5 C26 16 20 18.5 14.8 20.5 Z" fill="#e39774"/>
</g></svg>
<div class="t" style="left:897px;top:554px;font-size:23px;line-height:26px;color:#8390ab;-webkit-text-stroke:0.4px #8390ab;mix-blend-mode:multiply;">泛普软件</div>
<div class="t" style="left:871.5px;top:577px;font-family:&quot;Liberation Serif&quot;,serif;font-size:12.5px;line-height:14px;color:#e6a385;-webkit-text-stroke:0.35px #e6a385;letter-spacing:1.0px;mix-blend-mode:multiply;">www.fanpusoft.com</div>
</body></html>
